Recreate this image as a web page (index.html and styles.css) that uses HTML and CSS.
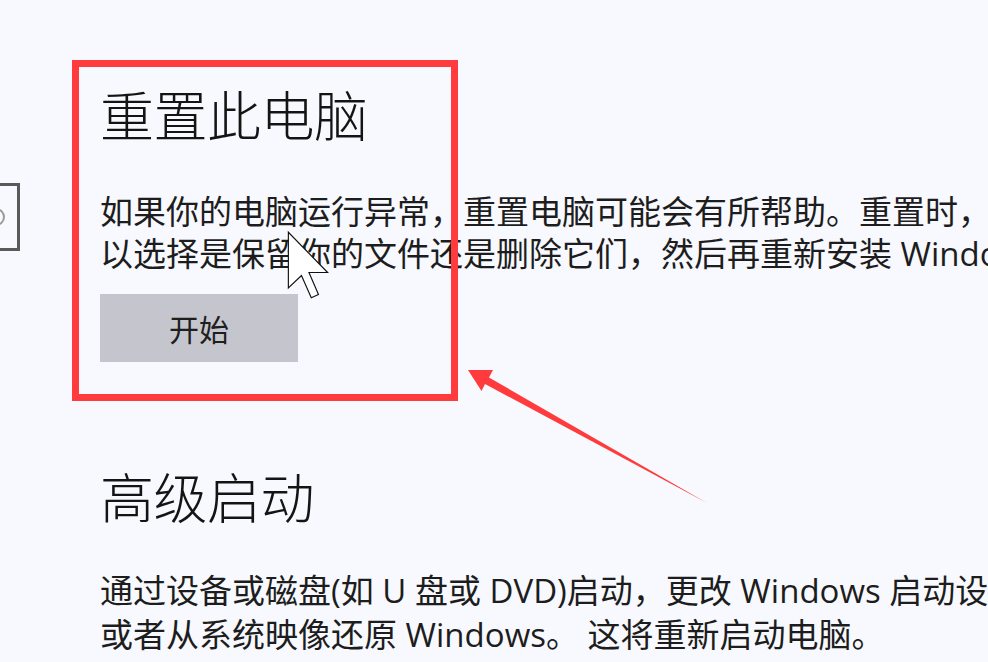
FILE: index.html
```html
<!DOCTYPE html>
<html lang="zh-CN">
<head>
<meta charset="utf-8">
<title>恢复</title>
<link rel="stylesheet" href="styles.css">
</head>
<body>
<div class="page">
  <div class="rail">
    <div class="sidebox"><span class="sideglyph"></span></div>
  </div>
  <main class="main">
    <section class="section reset">
      <h1 class="title">重置此电脑</h1>
      <p class="desc">如果你的电脑运行异常，重置电脑可能会有所帮助。重置时，你可<br>以选择是保留你的文件还是删除它们，然后再重新安装 Windows。</p>
      <button class="btn">开始</button>
    </section>
    <section class="section advanced">
      <h1 class="title">高级启动</h1>
      <p class="desc">通过设备或磁盘(如 U 盘或 DVD)启动，更改 Windows 启动设置，<br>或者从系统映像还原 Windows。 这将重新启动电脑。</p>
    </section>
  </main>
  <div class="highlight"></div>
  <svg class="arrow" width="988" height="662" viewBox="0 0 988 662">
    <polygon points="468,370 493,370 489,377.5 707,503 485,384 481.5,391" fill="#ff3b3d"/>
  </svg>
  <svg class="cursor" width="46" height="72" viewBox="-1 -1 14 22">
    <polygon points="0,0 0,17 4,13.2 7,20 9.2,19 6.3,12.3 12,12.3" fill="#ffffff" stroke="#111111" stroke-width="0.35" stroke-linejoin="miter"/>
  </svg>
</div>
</body>
</html>
```
FILE: styles.css
```css
html, body {
  margin: 0;
  padding: 0;
  background: #f8f9fe;
}
body {
  width: 988px;
  height: 662px;
  overflow: hidden;
  font-family: "Noto Sans", "Noto Sans CJK SC", sans-serif;
  color: #1b1b1b;
}
.page {
  position: relative;
  display: flex;
  width: 988px;
  height: 662px;
  overflow: hidden;
}
.rail {
  flex: 0 0 20px;
}
.sidebox {
  box-sizing: border-box;
  width: 44px;
  height: 68px;
  margin-left: -24px;
  margin-top: 183px;
  border: 3px solid #5a5a5a;
  display: flex;
  align-items: center;
}
.sideglyph {
  display: block;
  width: 14px;
  height: 14px;
  margin-left: 8px;
  border: 2px solid #9a9a9a;
  border-radius: 50%;
}
.main {
  flex: 1;
  padding-left: 80px;
  padding-top: 81px;
  min-width: 0;
}
.section {
  margin: 0;
}
.title {
  margin: 0;
  font-size: 54px;
  line-height: 70px;
  font-weight: 300;
  letter-spacing: -0.5px;
  color: #141414;
}
.desc {
  margin: 0;
  font-family: "Open Sans", "Noto Sans CJK SC", sans-serif;
  font-size: 33px;
  line-height: 42px;
  font-weight: 400;
  white-space: nowrap;
  color: #1d1d1d;
}
.reset .desc {
  margin-top: 40px;
}
.btn {
  display: block;
  margin-top: 19px;
  width: 198px;
  height: 68px;
  border: none;
  background: #c5c5cd;
  color: #1e1e1e;
  font-family: "Noto Sans CJK SC", sans-serif;
  font-size: 30px;
  padding: 0;
}
.advanced {
  margin-top: 101px;
}
.advanced .desc {
  margin-top: 36px;
  line-height: 44px;
}
.highlight {
  position: absolute;
  left: 72px;
  top: 60px;
  width: 386px;
  height: 341px;
  box-sizing: border-box;
  border: 7px solid #ff3b3d;
  pointer-events: none;
}
.arrow {
  position: absolute;
  left: 0;
  top: 0;
  pointer-events: none;
}
.cursor {
  position: absolute;
  left: 285px;
  top: 229px;
  pointer-events: none;
}
```
